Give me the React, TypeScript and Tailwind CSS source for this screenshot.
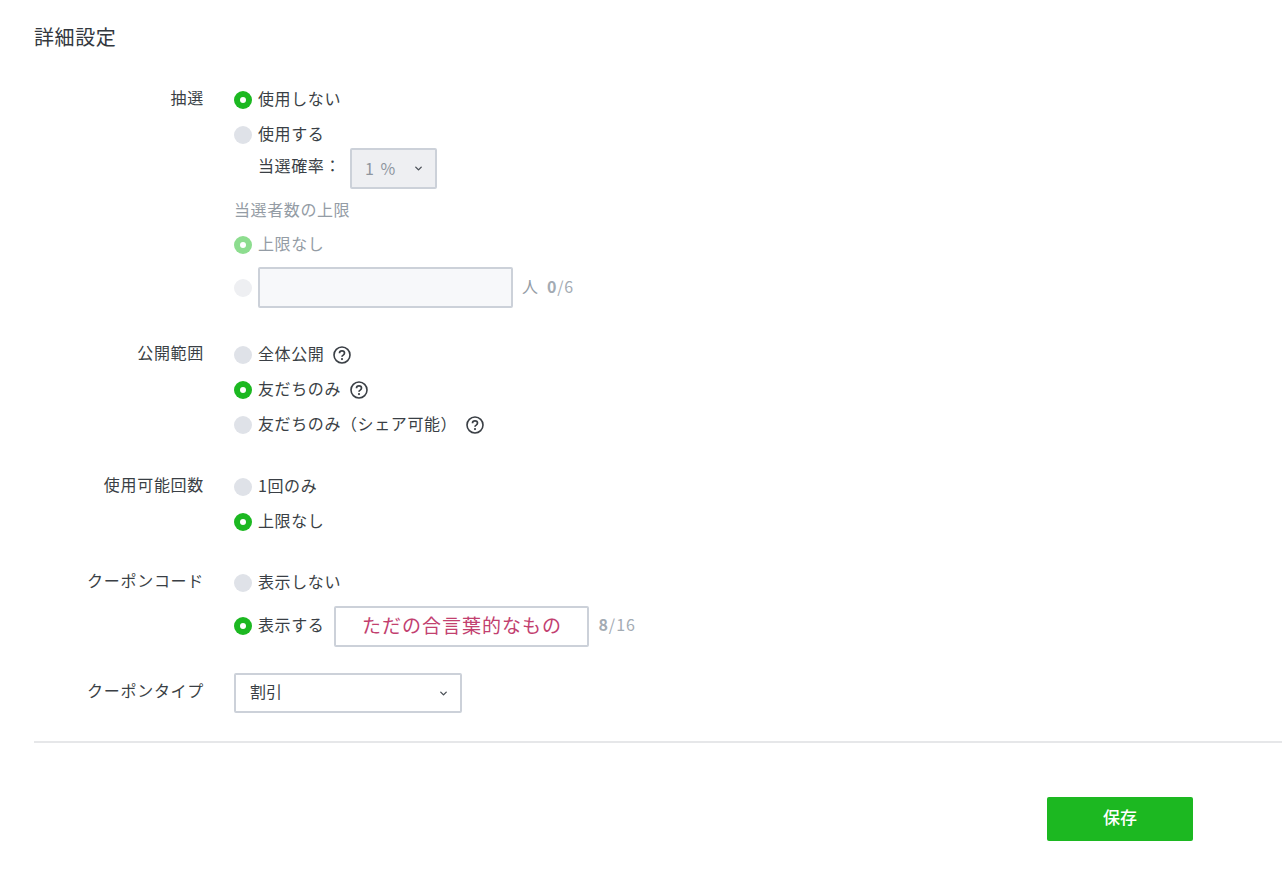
import { ChevronDown } from "lucide-react";

const font = {
  fontFamily: '"Noto Sans CJK JP", "Noto Sans", sans-serif',
};

function Radio({ on, faded }: { on?: boolean; faded?: boolean }) {
  if (on) {
    return (
      <span
        className={`flex h-[18px] w-[18px] shrink-0 items-center justify-center rounded-full ${
          faded ? "bg-[#8ddd8f]" : "bg-[#1cb821]"
        }`}
      >
        <span className="h-[6px] w-[6px] rounded-full bg-white" />
      </span>
    );
  }
  return (
    <span
      className={`h-[18px] w-[18px] shrink-0 rounded-full ${
        faded ? "bg-[#eeeff2]" : "bg-[#dfe2e8]"
      }`}
    />
  );
}

function Help() {
  return (
    <svg width="18" height="18" viewBox="0 0 18 18" fill="none" className="block shrink-0">
      <circle cx="9" cy="9" r="8" stroke="#3a3f45" strokeWidth="1.6" />
      <path
        d="M6.5 7.2C6.5 5.8 7.6 4.9 9 4.9s2.5.9 2.5 2.2c0 1-.6 1.5-1.3 2-.8.5-1.2.9-1.2 1.7"
        stroke="#3a3f45"
        strokeWidth="1.7"
      />
      <circle cx="9" cy="13.1" r="1.1" fill="#3a3f45" />
    </svg>
  );
}

function Row({
  on,
  faded,
  label,
  help,
}: {
  on?: boolean;
  faded?: boolean;
  label: string;
  help?: boolean;
}) {
  return (
    <div className="flex h-[35px] items-center">
      <Radio on={on} faded={faded} />
      <span
        className={`ml-[6px] pb-[4px] text-[16px] tracking-[0.6px] ${
          faded ? "text-[#949ca5]" : "text-[#3a3f45]"
        }`}
      >
        {label}
      </span>
      {help && (
        <span className="ml-[9px]">
          <Help />
        </span>
      )}
    </div>
  );
}

function Label({ children, low }: { children: string; low?: boolean }) {
  return (
    <div
      className={`w-[170px] shrink-0 text-right text-[16px] leading-[22px] tracking-[0.7px] text-[#3a3f45] ${
        low ? "pt-[6px]" : "pt-[4px]"
      }`}
    >
      {children}
    </div>
  );
}

export default function App() {
  return (
    <div style={font} className="h-[894px] w-[1282px] overflow-hidden bg-white pl-[34px] pt-[22px]">
      <h2 className="text-[20px] leading-[30px] tracking-[0.6px] text-[#33383e]">詳細設定</h2>

      {/* 抽選 */}
      <div className="mt-[30px] flex">
        <Label>抽選</Label>
        <div className="ml-[30px]">
          <Row on label="使用しない" />
          <Row label="使用する" />
          <div className="mt-[-4px] flex h-[41px] items-center pl-[24px]">
            <span className="pb-[8px] text-[16px] tracking-[0.6px] text-[#3a3f45]">当選確率：</span>
            <div className="ml-[9px] flex h-[41px] w-[87px] items-center justify-between rounded-[2px] border-2 border-[#ccd1d9] bg-[#eeeff2] pl-[13px] pr-[11px] text-[16px] tracking-[1.5px] text-[#8f969f]">
              <span className="pb-[2px]">1 %</span>
              <ChevronDown size={11} strokeWidth={3} className="text-[#4b5057]" />
            </div>
          </div>
          <div className="mt-[8px] text-[16px] leading-[24px] tracking-[0.6px] text-[#949ca5]">
            当選者数の上限
          </div>
          <div className="mt-[6px]">
            <Row on faded label="上限なし" />
          </div>
          <div className="mt-[5px] flex items-center">
            <Radio faded />
            <div className="ml-[6px] h-[41px] w-[255px] rounded-[2px] border-2 border-[#ccd1d9] bg-[#f7f8fa]" />
            <span className="ml-[9px] pb-[4px] text-[16px] text-[#949ca5]">人</span>
            <span className="ml-[9px] pb-[4px] text-[16px] tracking-[0.8px] text-[#a3abb3]">
              <b className="font-bold">0</b>/6
            </span>
          </div>
        </div>
      </div>

      {/* 公開範囲 */}
      <div className="mt-[29px] flex">
        <Label>公開範囲</Label>
        <div className="ml-[30px]">
          <Row label="全体公開" help />
          <Row on label="友だちのみ" help />
          <Row label="友だちのみ（シェア可能）" help />
        </div>
      </div>

      {/* 使用可能回数 */}
      <div className="mt-[27px] flex">
        <Label>使用可能回数</Label>
        <div className="ml-[30px]">
          <Row label="1回のみ" />
          <Row on label="上限なし" />
        </div>
      </div>

      {/* クーポンコード */}
      <div className="mt-[26px] flex">
        <Label>クーポンコード</Label>
        <div className="ml-[30px]">
          <Row label="表示しない" />
          <div className="mt-[6px] flex items-center">
            <span className="mb-[2px] flex">
              <Radio on />
            </span>
            <span className="ml-[6px] pb-[5px] text-[16px] tracking-[0.6px] text-[#3a3f45]">表示する</span>
            <div className="ml-[10px] flex h-[41px] w-[255px] items-center justify-center rounded-[2px] border-2 border-[#ccd1d9] bg-white pb-[2px] text-[19px] tracking-[1px] text-[#c2406f]">
              ただの合言葉的なもの
            </div>
            <span className="ml-[9px] pb-[5px] text-[16px] tracking-[1px] text-[#a3abb3]">
              <b className="font-bold">8</b>/16
            </span>
          </div>
        </div>
      </div>

      {/* クーポンタイプ */}
      <div className="mt-[26px] flex">
        <Label low>クーポンタイプ</Label>
        <div className="ml-[30px] flex h-[40px] w-[228px] items-center justify-between rounded-[2px] border-2 border-[#ccd1d9] bg-white pl-[14px] pr-[11px] text-[16px] text-[#3a3f45]">
          <span className="pb-[4px]">割引</span>
          <ChevronDown size={11} strokeWidth={3} className="text-[#4b5057]" />
        </div>
      </div>

      <div className="mt-[28px] h-[2px] bg-[#e6e7e9]" />

      <div className="mt-[54px] flex">
        <button className="ml-[1013px] h-[44px] w-[146px] rounded-[2px] bg-[#1cb821] pb-[5px] text-[17px] font-medium text-white">
          保存
        </button>
      </div>
    </div>
  );
}
